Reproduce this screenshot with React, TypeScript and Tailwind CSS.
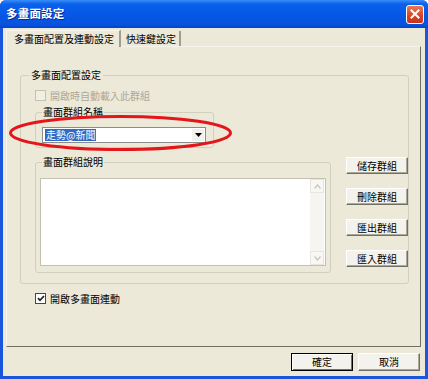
import React from 'react';

function XPButton({ label, isDefault = false }: { label: string; isDefault?: boolean }) {
  return (
    <button
      className={
        isDefault
          ? 'h-[18px] w-[62px] border border-black bg-[#F3F2EC] shadow-[inset_1px_1px_0_#fff,inset_-1px_-1px_0_#716F64] text-[10px] leading-none text-black'
          : 'h-[18px] w-[62px] border border-t-white border-l-white border-r-[#716F64] border-b-[#716F64] bg-[#F3F2EC] shadow-[inset_-1px_-1px_0_#ACA899] text-[10px] leading-none text-black'
      }
    >
      {label}
    </button>
  );
}

function SideButton({ label }: { label: string }) {
  return (
    <button className="h-[17px] w-[62px] border border-t-white border-l-white border-r-[#716F64] border-b-[#716F64] bg-[#F3F2EC] shadow-[inset_-1px_-1px_0_#ACA899] text-[10px] leading-none text-black">
      {label}
    </button>
  );
}

function Chevron({ up }: { up?: boolean }) {
  return (
    <svg width="7" height="5" viewBox="0 0 7 5">
      <path
        d={up ? 'M0.5 4.5 L3.5 1 L6.5 4.5' : 'M0.5 0.5 L3.5 4 L6.5 0.5'}
        fill="none"
        stroke="#C9C7BA"
        strokeWidth="1.3"
      />
    </svg>
  );
}

export default function App() {
  return (
    <div className="relative w-[428px] h-[379px] overflow-hidden font-['Noto_Sans_CJK_TC','Noto_Sans_CJK_JP',sans-serif] text-[10px] text-black">
      <div className="flex flex-col w-full h-full bg-[#1A55DC] rounded-t-[6px]">
        {/* Title bar */}
        <div className="h-[28px] shrink-0 flex items-center justify-between pl-[6px] pr-[4px] rounded-t-[6px] bg-[linear-gradient(to_bottom,#3C8EFA_0%,#0A62EA_14%,#0658E6_50%,#0653DE_88%,#0842C2_100%)]">
          <span className="text-[11.5px] font-bold text-white [text-shadow:1px_1px_0_#0A2A8A] tracking-[0.2px]">多畫面設定</span>
          <div className="w-[18px] h-[19px] rounded-[3px] border border-white bg-[linear-gradient(to_bottom,#E8785A,#D9421F_60%,#C7341A)] flex items-center justify-center">
            <svg width="10" height="10" viewBox="0 0 10 10">
              <path d="M1.5 1.5 L8.5 8.5 M8.5 1.5 L1.5 8.5" stroke="white" strokeWidth="2" strokeLinecap="square" />
            </svg>
          </div>
        </div>

        {/* Body */}
        <div className="flex-1 mx-[3px] mb-[3px] bg-[#ECE9D8] flex flex-col">
          {/* Tabs */}
          <div className="flex items-end mt-[2px] ml-[3px] h-[16px]">
            <div className="h-[17px] w-[115px] -mb-[1px] relative z-10 bg-[#ECE9D8] border-t border-l border-t-[#F6F5EF] border-l-[#F6F5EF] border-r-2 border-r-[#A09E92] flex items-center pl-[7px] leading-none">
              多畫面配置及連動設定
            </div>
            <div className="h-[15px] w-[60px] border-r-2 border-r-[#A09E92] flex items-center pl-[5px] leading-none">
              快速鍵設定
            </div>
          </div>

          {/* Tab panel */}
          <div className="ml-[3px] w-[415px] h-[301px] border border-t-[#F4F3EE] border-l-[#F4F3EE] border-r-[#716F64] border-b-[#716F64] flex flex-col">
            <fieldset className="ml-[13px] mt-[21px] w-[389px] border border-[#D0D0BF] rounded-[3px] pl-[14px] pb-[10px]">
              <legend className="ml-[-6px] px-[2px] h-[14px] leading-[14px]">多畫面配置設定</legend>

              <div className="mt-[7px] h-[13px] flex items-center gap-[4px] text-[#ACA899]">
                <span className="w-[11px] h-[11px] border border-[#C5C2B2] bg-[#F1EFE2]" />
                <span className="leading-none">開啟時自動載入此群組</span>
              </div>

              <fieldset className="mt-[3px] w-[179px] border border-[#D0D0BF] rounded-[3px] pl-[6px] pb-[4px]">
                <legend className="px-[1px] h-[14px] leading-[14px]">畫面群組名稱</legend>
                <div className="mt-[8px] w-[164px] h-[16px] border border-[#8C8C8C] bg-white flex items-center p-[1px]">
                  <div className="flex-1 h-full flex items-center">
                    <span className="bg-[#316AC5] text-white h-[12px] leading-[12px] px-[1px] ml-[1px]">走勢@新聞</span>
                  </div>
                  <div className="w-[12px] h-full bg-[#F3F2EC] flex items-center justify-center">
                    <svg width="7" height="4" viewBox="0 0 7 4">
                      <path d="M0 0 H7 L3.5 4 Z" fill="black" />
                    </svg>
                  </div>
                </div>
              </fieldset>

              <div className="mt-[7px] flex items-start">
                <fieldset className="w-[296px] border border-[#D0D0BF] rounded-[3px] pl-[4px] pb-[6px]">
                  <legend className="ml-[2px] px-[1px] h-[14px] leading-[14px]">畫面群組說明</legend>
                  <div className="mt-[9px] w-[286px] h-[88px] border border-[#C4C1B2] bg-white flex justify-end">
                    <div className="w-[14px] h-full my-0 mr-[1px] bg-[#F6F5F0] flex flex-col justify-between">
                      <div className="h-[14px] flex items-center justify-center border border-[#E8E6DC] bg-[#F8F7F3]">
                        <Chevron up />
                      </div>
                      <div className="h-[14px] flex items-center justify-center border border-[#E8E6DC] bg-[#F8F7F3]">
                        <Chevron />
                      </div>
                    </div>
                  </div>
                </fieldset>

                <div className="ml-[15px] mt-[2px] flex flex-col gap-[14px]">
                  <SideButton label="儲存群組" />
                  <SideButton label="刪除群組" />
                  <SideButton label="匯出群組" />
                  <SideButton label="匯入群組" />
                </div>
              </div>
            </fieldset>

            <div className="ml-[28px] mt-[8px] h-[13px] flex items-center gap-[4px]">
              <span className="w-[11px] h-[11px] border border-[#1C5180] bg-white flex items-center justify-center">
                <svg width="8" height="7" viewBox="0 0 8 7">
                  <path d="M1 3.2 L3 5.3 L7 1" fill="none" stroke="#21A121" strokeWidth="1.8" className="stroke-[#222]" />
                </svg>
              </span>
              <span className="leading-none">開啟多畫面連動</span>
            </div>
          </div>

          {/* Footer buttons */}
          <div className="mt-[6px] pr-[5px] flex justify-end gap-[5px]">
            <XPButton label="確定" isDefault />
            <XPButton label="取消" />
          </div>
        </div>
      </div>

      {/* Red annotation ellipse */}
      <svg className="absolute left-0 top-0 pointer-events-none" width="428" height="379">
        <ellipse cx="120.5" cy="133" rx="110" ry="16.5" fill="none" stroke="#E3161B" strokeWidth="3" />
      </svg>
    </div>
  );
}
